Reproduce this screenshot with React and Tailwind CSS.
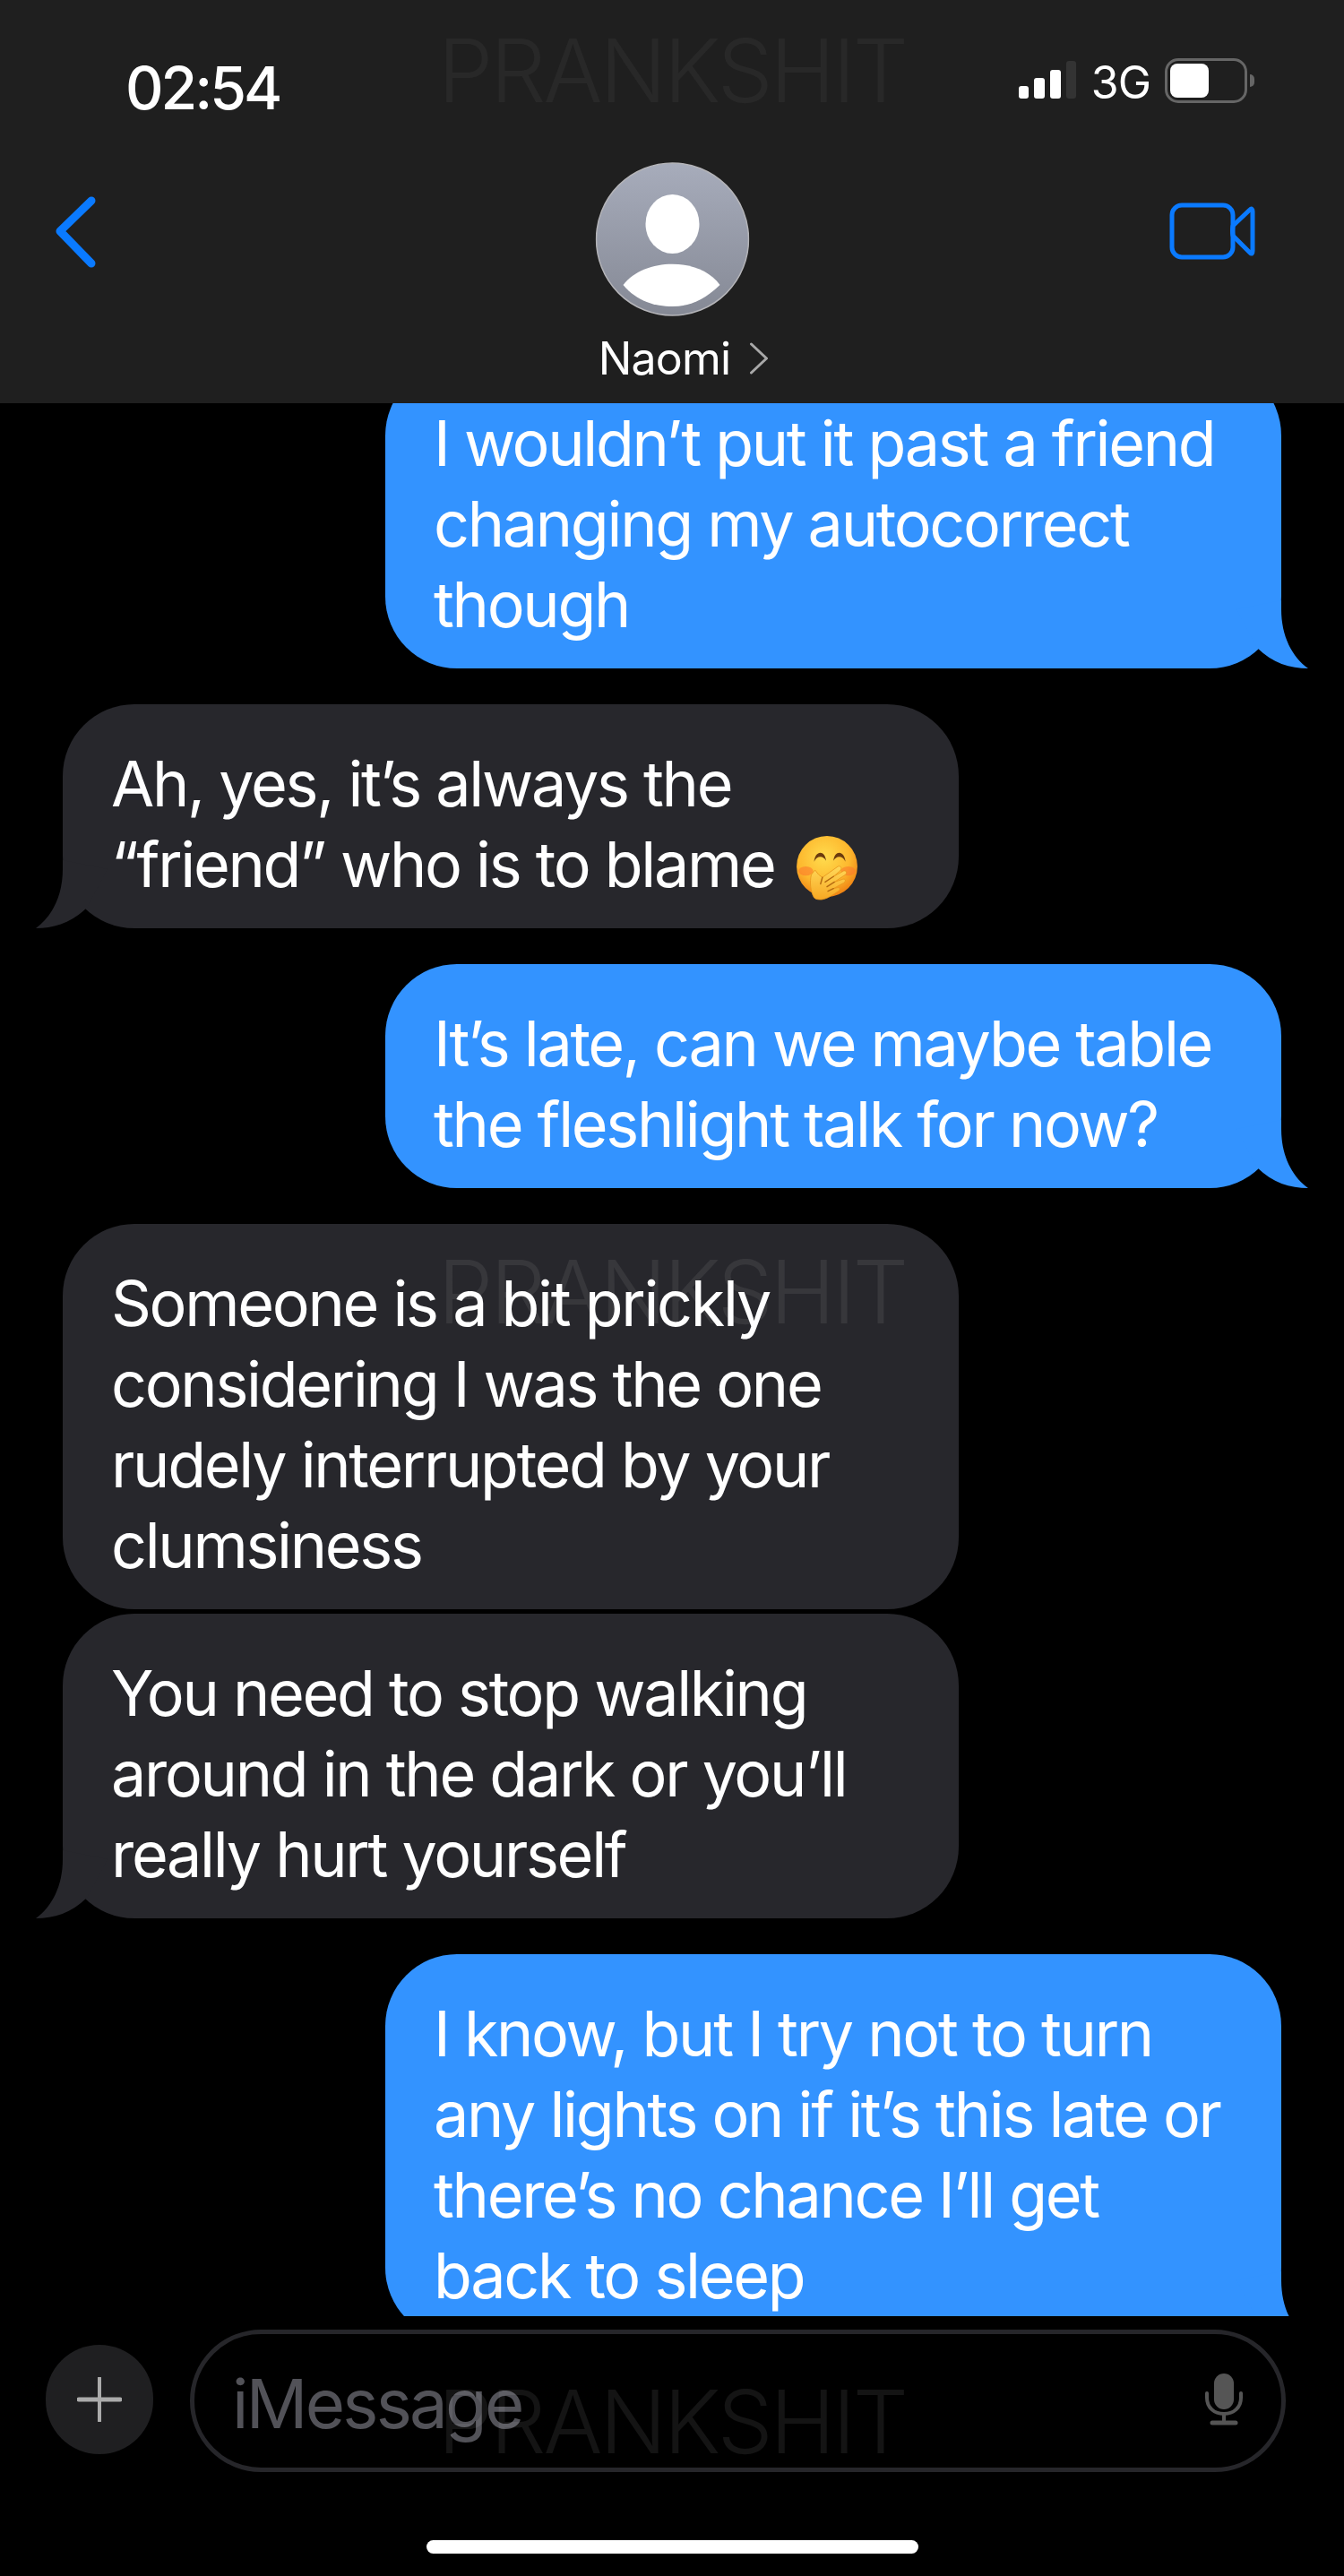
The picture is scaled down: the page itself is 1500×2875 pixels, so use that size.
const messages = [
  { from: "me", tail: true, lines: ["I wouldn’t put it past a friend", "changing my autocorrect", "though"], className: "-mt-[44px]" },
  { from: "them", tail: true, lines: ["Ah, yes, it’s always the", <>“friend” who is to blame <Emoji /></>], className: "mt-10" },
  { from: "me", tail: true, lines: ["It’s late, can we maybe table", "the fleshlight talk for now?"], className: "mt-10" },
  { from: "them", tail: false, lines: ["Someone is a bit prickly", "considering I was the one", "rudely interrupted by your", "clumsiness"], className: "mt-10" },
  { from: "them", tail: true, lines: ["You need to stop walking", "around in the dark or you’ll", "really hurt yourself"], className: "mt-[5px]" },
  { from: "me", tail: true, lines: ["I know, but I try not to turn", "any lights on if it’s this late or", "there’s no chance I’ll get", "back to sleep"], className: "mt-10" },
];

function Emoji() {
  return (
    <svg viewBox="2 0 66 70" className="ml-[7px] inline-block w-[68px] h-[72px] align-[-15px]">
      <defs>
        <radialGradient id="face" cx="45%" cy="35%" r="65%">
          <stop offset="0%" stopColor="#ffdc4e" />
          <stop offset="65%" stopColor="#fdb82e" />
          <stop offset="100%" stopColor="#f08414" />
        </radialGradient>
        <linearGradient id="hand" x1="0" y1="0" x2="0" y2="1">
          <stop offset="0%" stopColor="#ffd95a" />
          <stop offset="100%" stopColor="#f7a823" />
        </linearGradient>
      </defs>
      <circle cx="35" cy="33" r="33" fill="url(#face)" />
      <ellipse cx="12" cy="38" rx="8" ry="5" fill="#fb7a2c" opacity="0.6" />
      <ellipse cx="58" cy="38" rx="8" ry="5" fill="#fb7a2c" opacity="0.6" />
      <path d="M21 28 C22 15 33 15 34 27 C31 21 24 21 21 28Z" fill="#6b3b0e" />
      <path d="M42 27 C43 15 54 15 55 28 C52 21 45 21 42 27Z" fill="#6b3b0e" />
      <path d="M21 67 C17 60 16 50 18 42 L22 37 L26 42 L30 45 L47 33 C50 32 52 35 49 38 L42 44 L53 38 C56 37 57 40 55 42 L43 50 L52 47 C55 46 56 49 53 51 L42 57 L47 56 C50 56 49 59 47 60 C41 64 36 68 29 69 C26 69 23 69 21 67Z" fill="url(#hand)" stroke="#e8961c" strokeWidth="0.8" />
      <path d="M30 45 L28 52 M42 44 L33 50 M43 50 L35 55 M42 57 L36 60" stroke="#b56a10" strokeWidth="1.4" fill="none" strokeLinecap="round" />
    </svg>
  );
}

function Tail({ side, color }) {
  return (
    <svg
      viewBox="0 0 80 76"
      className={side === "me" ? "absolute -right-[30px] bottom-0 w-[80px] h-[76px]" : "absolute -left-[30px] bottom-0 w-[80px] h-[76px] -scale-x-100"}
    >
      <path d="M50 0 L50 10 C50 40 62 63 80 76 C60 76 40 70 23 53 L0 10Z" fill={color} />
    </svg>
  );
}

function Bubble({ from, tail, lines, className }) {
  const mine = from === "me";
  return (
    <div
      className={`relative w-[1000px] shrink-0 rounded-[80px] px-[54px] pt-[44px] pb-[26px] text-white text-[70px] leading-[90px] tracking-[-2.3px] whitespace-nowrap ${
        mine ? "self-end bg-[#3393ff]" : "self-start bg-[#27272c]"
      } ${className}`}
    >
      {lines.map((line, i) => (
        <div key={i} className="relative h-[90px]">{line}</div>
      ))}
      {tail && <Tail side={from} color={mine ? "#3393ff" : "#27272c"} />}
    </div>
  );
}

function Watermark({ className }) {
  return (
    <div className={`absolute left-0 w-full text-center text-[98px] leading-[98px] font-light tracking-[-3px] pointer-events-none ${className}`}>
      PRANKSHIT
    </div>
  );
}

function StatusBar() {
  return (
    <div className="flex h-[130px] items-start justify-between pl-[140px] pr-[100px] pt-[59px]">
      <span className="text-[66px] leading-[78px] font-medium tracking-[-3px] text-white">02:54</span>
      <div className="flex items-start -mt-[1px]">
        <svg viewBox="0 0 66 42" className="mt-[10px] w-[66px] h-[42px]">
          <rect x="0" y="28" width="11" height="14" rx="3" fill="#fff" />
          <rect x="17" y="19" width="12" height="23" rx="3" fill="#fff" />
          <rect x="35" y="10" width="12" height="32" rx="3" fill="#fff" />
          <rect x="53" y="0" width="11" height="42" rx="3" fill="#333" />
        </svg>
        <span className="ml-[15px] mt-[2px] text-[50px] leading-[64px] tracking-[-1px] text-white">3G</span>
        <div className="ml-[16px] mt-[7px] flex h-[50px] w-[92px] rounded-[15px] border-[3px] border-[#666] p-[3px]">
          <div className="h-full w-[43px] rounded-[8px] bg-white" />
        </div>
        <div className="ml-[3px] mt-[25px] h-[14px] w-[5px] rounded-r-full bg-[#666]" />
      </div>
    </div>
  );
}

function Header() {
  return (
    <div className="h-[450px] shrink-0 bg-[#1f1f1f]">
      <StatusBar />
      <div className="grid grid-cols-[1fr_300px_1fr] pl-[60px] pr-[99px]">
        <svg viewBox="0 0 48 80" className="mt-[89px] w-[48px] h-[80px]">
          <path d="M42 5 L7 39 L42 75" fill="none" stroke="#0a7aff" strokeWidth="9" strokeLinecap="round" strokeLinejoin="round" />
        </svg>
        <div className="flex flex-col items-center mt-[51px] translate-x-[19.5px]">
          <svg viewBox="0 0 172 172" className="w-[172px] h-[172px]">
            <defs>
              <linearGradient id="avatar" x1="0" y1="0" x2="0" y2="1">
                <stop offset="0%" stopColor="#a7acbb" />
                <stop offset="100%" stopColor="#858995" />
              </linearGradient>
            </defs>
            <circle cx="86" cy="86" r="85" fill="url(#avatar)" stroke="#b4b4b8" strokeWidth="1.5" />
            <ellipse cx="86" cy="69" rx="30" ry="33" fill="#fff" />
            <path d="M31 137 C55 106 117 106 139 137 C120 155 104 161 86 161 C66 161 46 155 31 137Z" fill="#fff" />
          </svg>
          <div className="flex items-center mt-[17px] ml-[26px]">
            <span className="text-[50px] leading-[60px] tracking-[-0.8px] text-white">Naomi</span>
            <svg viewBox="0 0 22 36" className="ml-[21px] w-[22px] h-[36px]">
              <path d="M2 2 L19 18 L2 34" fill="none" stroke="#a8a8a8" strokeWidth="3" strokeLinecap="round" strokeLinejoin="round" />
            </svg>
          </div>
        </div>
        <svg viewBox="0 0 96 64" className="mt-[96px] w-[96px] h-[64px] justify-self-end">
          <rect x="3" y="3" width="68" height="58" rx="11" fill="none" stroke="#0a7aff" strokeWidth="5" />
          <path d="M71 26 L90 8 C92 6 93 8 93 10 L93 54 C93 57 92 58 90 56 L71 37 Q70 32 71 26Z" fill="none" stroke="#0a7aff" strokeWidth="5" strokeLinejoin="round" />
        </svg>
      </div>
    </div>
  );
}

function Composer() {
  return (
    <div className="flex-1 bg-black">
      <div className="flex items-center pl-[51px] pr-[65px] pt-[15px]">
        <div className="flex h-[122px] w-[120px] items-center justify-center rounded-full bg-[#1f1f21] -mt-[4px]">
          <svg viewBox="0 0 50 50" className="w-[50px] h-[50px]">
            <path d="M25 1 V49" stroke="#ababab" strokeWidth="4" strokeLinecap="round" />
            <path d="M2 25 H48" stroke="#ababab" strokeWidth="5" strokeLinecap="round" />
          </svg>
        </div>
        <div className="ml-[41px] flex h-[159px] flex-1 items-center justify-between rounded-full border-[5px] border-[#26262a] pl-[42px] pr-[43px]">
          <span className="mt-[4px] text-[76px] leading-[90px] tracking-[-2.7px] text-[#525258]">iMessage</span>
          <svg viewBox="0 0 42 58" className="w-[42px] h-[58px] -mt-[3px]">
            <rect x="10" y="0" width="22" height="40" rx="11" fill="#555" />
            <path d="M2 22 V27 C2 38 10 45 21 45 C32 45 40 38 40 27 V22" fill="none" stroke="#555" strokeWidth="4" strokeLinecap="round" />
            <path d="M21 45 V54" stroke="#555" strokeWidth="4" />
            <path d="M8 55 H34" stroke="#555" strokeWidth="5" strokeLinecap="round" />
          </svg>
        </div>
      </div>
      <div className="mx-auto mt-[76px] h-[15px] w-[549px] rounded-full bg-white" />
    </div>
  );
}

export default function App() {
  return (
    <div className="relative flex h-[2875px] w-[1500px] flex-col overflow-hidden bg-black font-['Inter',sans-serif]">
      <Header />
      <div className="flex h-[2135px] shrink-0 flex-col overflow-hidden px-[70px]">
        {messages.map((m, i) => (
          <Bubble key={i} {...m} />
        ))}
      </div>
      <Composer />
      <Watermark className="top-[30px] text-white/[0.045]" />
      <Watermark className="top-[1393px] text-white/[0.075]" />
      <Watermark className="top-[2654px] text-white/[0.08]" />
    </div>
  );
}
